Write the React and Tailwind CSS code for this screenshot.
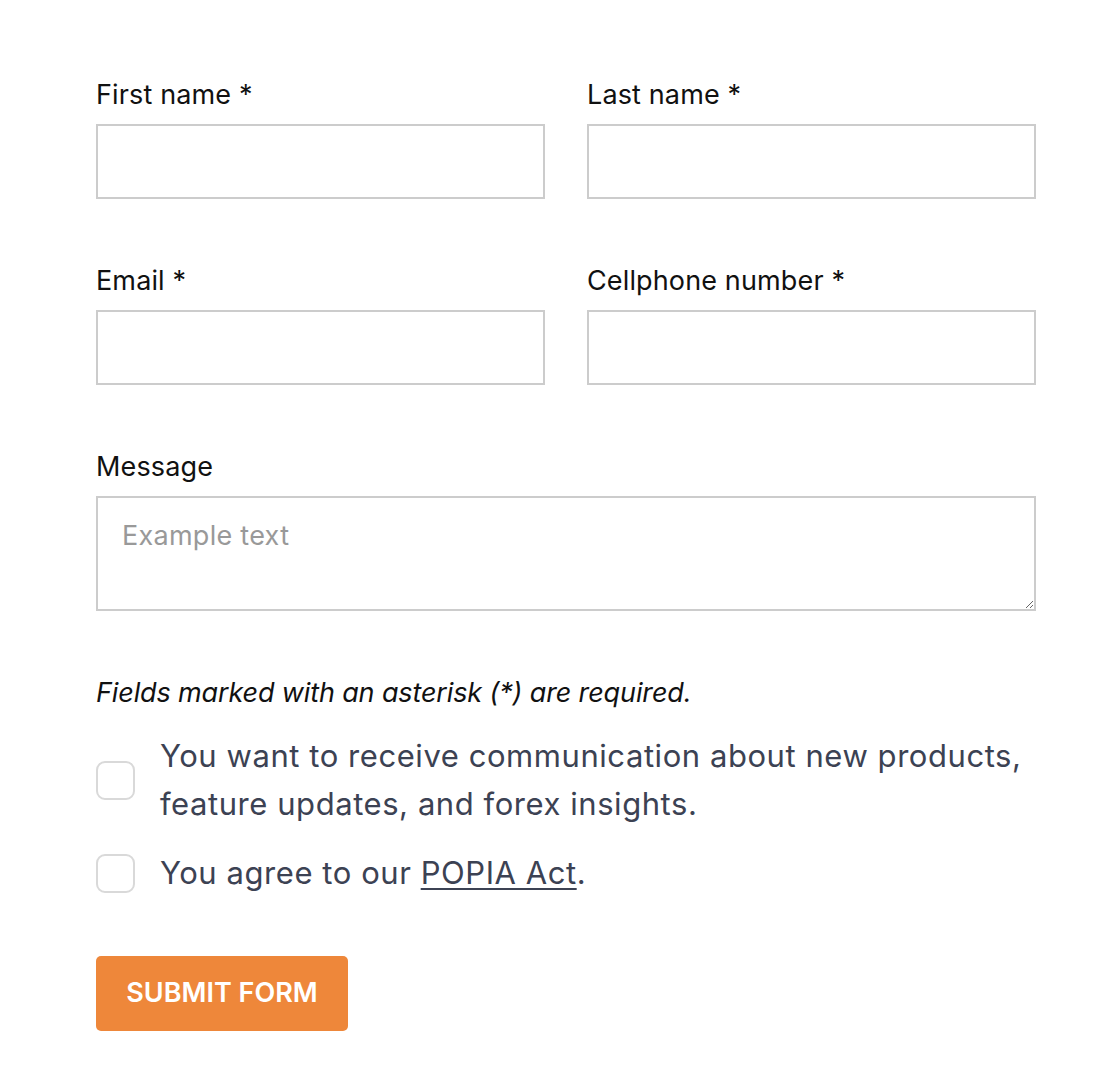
import React from 'react';

const font = { fontFamily: 'Inter, "Noto Sans", sans-serif' };

function Field({ label, required }) {
  return (
    <div className="flex flex-col">
      <label className="text-[27px] leading-[36px] text-[#111] tracking-[0.005em] mb-[11px]">
        {label}
        {required && <span> *</span>}
      </label>
      <input className="h-[75px] w-full border-2 border-[#cccccc] bg-white outline-none px-6" />
    </div>
  );
}

export default function App() {
  return (
    <div className="min-h-screen bg-white" style={font}>
      <form className="w-[940px] ml-[96px] pt-[77px]">
        <div className="grid grid-cols-2 gap-x-[42px] gap-y-[64px]">
          <Field label="First name" required />
          <Field label="Last name" required />
          <Field label="Email" required />
          <Field label="Cellphone number" required />
        </div>

        <div className="flex flex-col mt-[64px]">
          <label className="text-[27px] leading-[36px] text-[#111] tracking-[0.005em] mb-[11px]">
            Message
          </label>
          <textarea
            placeholder="Example text"
            className="h-[115px] w-full border-2 border-[#cccccc] bg-white outline-none px-6 pt-[18px] text-[27px] tracking-[0.01em] placeholder:text-[#999] resize-y"
          />
        </div>

        <p className="mt-[64px] text-[27px] italic leading-[36px] text-[#111] tracking-[-0.005em]">
          Fields marked with an asterisk (*) are required.
        </p>

        <div className="mt-[21px] flex flex-col gap-[21px] text-[31px] leading-[48px] text-[#3c4253] tracking-[0.018em]">
          <label className="flex items-center gap-[25px]">
            <span className="w-[39px] h-[39px] shrink-0 rounded-[9px] border-2 border-[#d9d9d9] bg-white" />
            <span>
              You want to receive communication about new products, feature updates, and forex insights.
            </span>
          </label>
          <label className="flex items-center gap-[25px]">
            <span className="w-[39px] h-[39px] shrink-0 rounded-[9px] border-2 border-[#d9d9d9] bg-white" />
            <span>
              You agree to our{' '}
              <a href="#" className="underline underline-offset-[4px] decoration-2">POPIA Act</a>.
            </span>
          </label>
        </div>

        <button
          type="button"
          className="mt-[59px] w-[252px] h-[75px] rounded-[5px] bg-[#ee873a] text-white text-[27px] font-semibold tracking-[0em]"
        >
          SUBMIT FORM
        </button>
      </form>
    </div>
  );
}
